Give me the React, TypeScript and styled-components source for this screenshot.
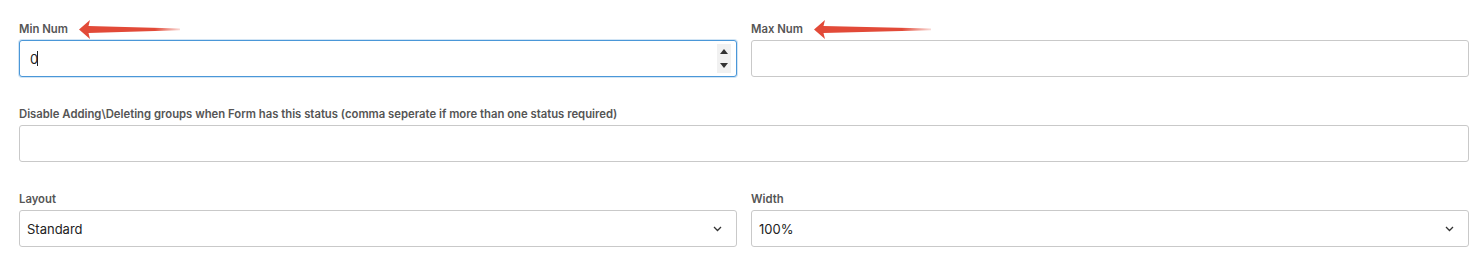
import styled, { createGlobalStyle } from "styled-components";

const GlobalStyle = createGlobalStyle`
  body {
    margin: 0;
    background: #ffffff;
    font-family: Inter, "Noto Sans", sans-serif;
  }
`;

const Form = styled.div`
  width: 1450px;
  padding: 22px 0 0 19px;
  display: flex;
  flex-direction: column;
  gap: 30px;
`;

const Row = styled.div<{ columns: number }>`
  display: grid;
  grid-template-columns: repeat(${(p) => p.columns}, 1fr);
  column-gap: 14px;
`;

const Field = styled.div`
  display: flex;
  flex-direction: column;
  gap: 4px;
  position: relative;
`;

const Label = styled.label`
  font-size: 11.3px;
  line-height: 14px;
  font-weight: 600;
  color: #555555;
  white-space: nowrap;
`;

const Control = styled.div`
  position: relative;
`;

const TextInput = styled.input<{ focused?: boolean }>`
  box-sizing: border-box;
  width: 100%;
  height: 37px;
  padding: 0 10px;
  border: 1px solid ${(p) => (p.focused ? "#4a97d8" : "#c9c9c9")};
  border-radius: 3px;
  font-family: inherit;
  font-size: 13px;
  color: #222222;
  background: #ffffff;
  outline: none;
  caret-color: transparent;
  box-shadow: ${(p) => (p.focused ? "0 0 0 1px rgba(74,151,216,0.25)" : "none")};
  -moz-appearance: textfield;
  &::-webkit-inner-spin-button,
  &::-webkit-outer-spin-button {
    -webkit-appearance: none;
    margin: 0;
  }
`;

const Caret = styled.span`
  position: absolute;
  left: 18px;
  top: 11px;
  width: 1px;
  height: 15px;
  background: #222222;
  pointer-events: none;
`;

const Select = styled.select`
  box-sizing: border-box;
  width: 100%;
  height: 37px;
  padding: 0 30px 0 7px;
  border: 1px solid #c9c9c9;
  border-radius: 3px;
  font-family: inherit;
  font-size: 13px;
  color: #222222;
  background: #ffffff;
  appearance: none;
  outline: none;
`;

const Spinner = styled.div`
  position: absolute;
  right: 6px;
  top: 4px;
  bottom: 4px;
  width: 14px;
  background: #f1f1f1;
  display: flex;
  flex-direction: column;
  align-items: center;
  justify-content: space-around;
  pointer-events: none;
`;

const Chevron = styled.svg`
  position: absolute;
  right: 15px;
  top: 16px;
  pointer-events: none;
`;

const Arrow = styled.svg<{ offset: number }>`
  position: absolute;
  left: ${(p) => p.offset}px;
  top: -3px;
  pointer-events: none;
`;

function PointerArrow({ offset, length }: { offset: number; length: number }) {
  const id = `fade${offset}`;
  return (
    <Arrow offset={offset} width={length} height={21} viewBox={`0 0 ${length} 21`}>
      <defs>
        <linearGradient id={id} x1="0" x2="1" y1="0" y2="0">
          <stop offset="0" stopColor="#e24a38" />
          <stop offset="0.75" stopColor="#e24a38" />
          <stop offset="1" stopColor="#e24a38" stopOpacity="0.2" />
        </linearGradient>
      </defs>
      <polygon
        fill={`url(#${id})`}
        points={`0,10.5 11,1 9.5,7 ${length},9.6 ${length},11.2 9.5,14 11,20`}
      />
    </Arrow>
  );
}

function SpinnerArrows() {
  return (
    <Spinner>
      <svg width="8" height="5" viewBox="0 0 8 5">
        <polygon points="4,0 8,5 0,5" fill="#333" />
      </svg>
      <svg width="8" height="5" viewBox="0 0 8 5">
        <polygon points="0,0 8,0 4,5" fill="#333" />
      </svg>
    </Spinner>
  );
}

function DownChevron() {
  return (
    <Chevron width="9" height="6" viewBox="0 0 9 6">
      <polyline points="1,1 4.5,4.5 8,1" fill="none" stroke="#333" strokeWidth="1.3" />
    </Chevron>
  );
}

export default function App() {
  return (
    <>
      <GlobalStyle />
      <Form>
        <Row columns={2}>
          <Field>
            <Label>Min Num</Label>
            <PointerArrow offset={60} length={101} />
            <Control>
              <TextInput type="number" defaultValue={0} focused autoFocus />
              <Caret />
              <SpinnerArrows />
            </Control>
          </Field>
          <Field>
            <Label>Max Num</Label>
            <PointerArrow offset={63} length={117} />
            <Control>
              <TextInput type="number" />
            </Control>
          </Field>
        </Row>
        <Row columns={1}>
          <Field>
            <Label>
              Disable Adding\Deleting groups when Form has this status (comma seperate if more than one status required)
            </Label>
            <Control>
              <TextInput type="text" />
            </Control>
          </Field>
        </Row>
        <Row columns={2}>
          <Field>
            <Label>Layout</Label>
            <Control>
              <Select defaultValue="standard">
                <option value="standard">Standard</option>
              </Select>
              <DownChevron />
            </Control>
          </Field>
          <Field>
            <Label>Width</Label>
            <Control>
              <Select defaultValue="100">
                <option value="100">100%</option>
              </Select>
              <DownChevron />
            </Control>
          </Field>
        </Row>
      </Form>
    </>
  );
}
